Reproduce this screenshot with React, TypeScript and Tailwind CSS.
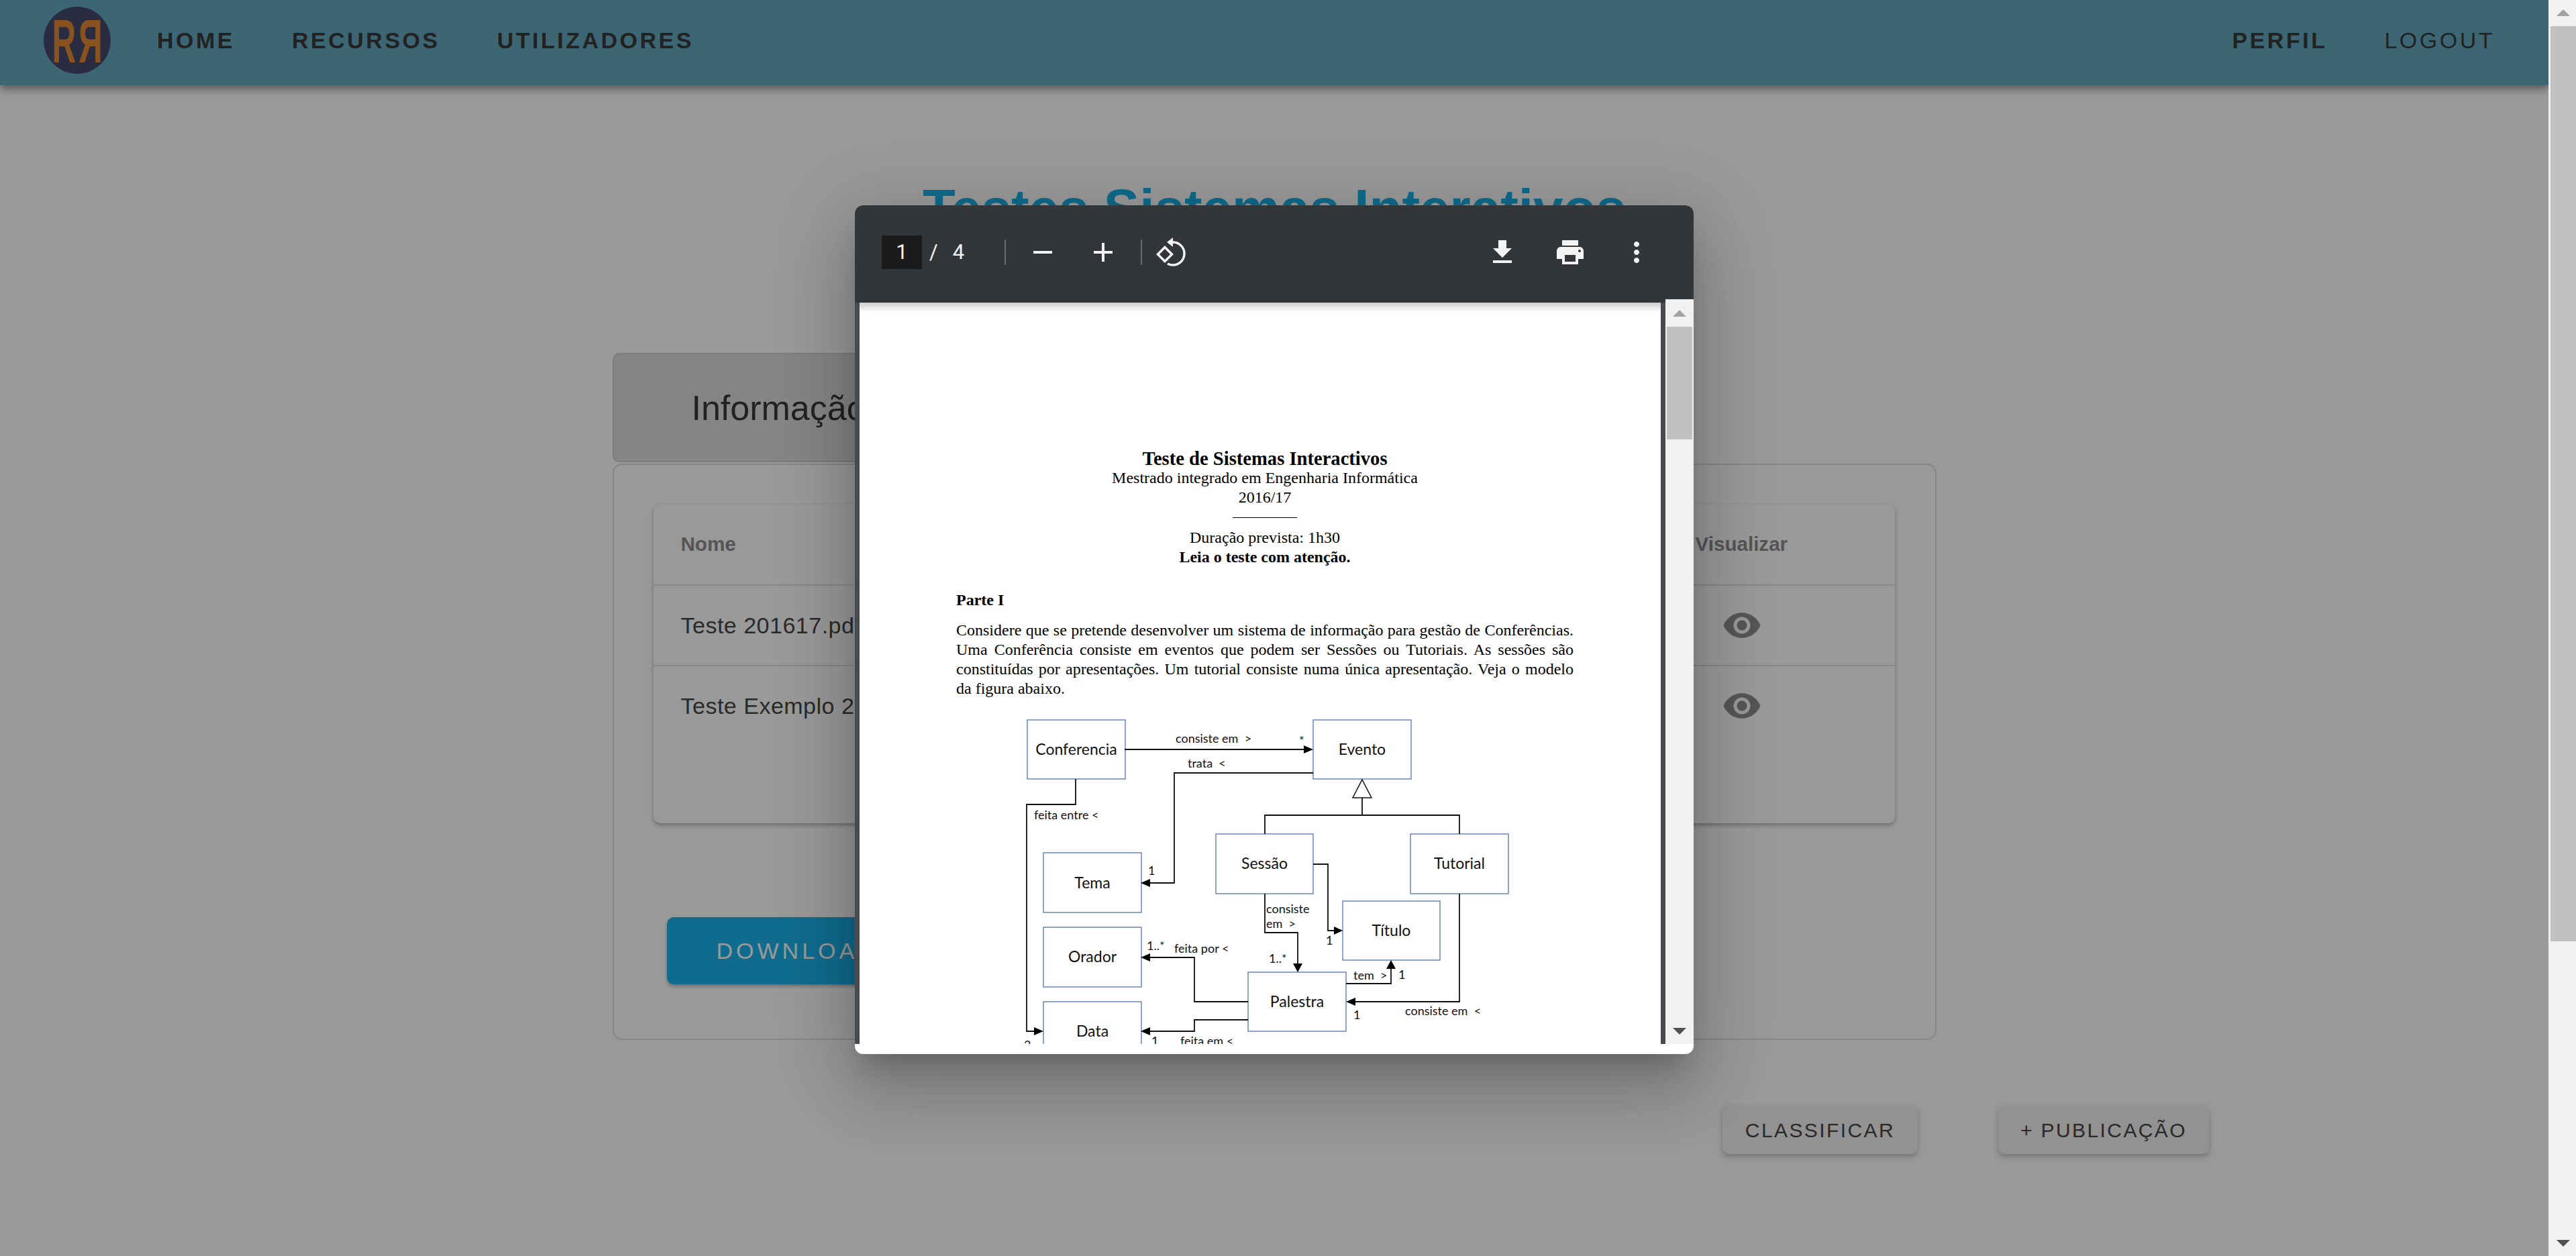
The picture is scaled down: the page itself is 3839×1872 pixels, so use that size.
import { Fragment } from "react";

const EYE =
  "M12 4.5C7 4.5 2.73 7.61 1 12c1.73 4.39 6 7.5 11 7.5s9.27-3.11 11-7.5c-1.73-4.39-6-7.5-11-7.5zM12 17c-2.76 0-5-2.24-5-5s2.24-5 5-5 5 2.24 5 5-2.24 5-5 5zm0-8c-1.66 0-3 1.34-3 3s1.34 3 3 3 3-1.34 3-3-1.34-3-3-3z";

function Logo() {
  return (
    <svg viewBox="0 0 100 100" className="h-[100px] w-[100px] shrink-0">
      <circle cx="50" cy="50" r="50" fill="#464b6e" />
      <g fill="#e68935" fontFamily="Liberation Sans, sans-serif" fontSize="90" fontWeight="700">
        <text transform="translate(12.500 83) scale(0.55 1)">R</text>
        <text transform="translate(87.500 83) scale(-0.55 1)">R</text>
      </g>
    </svg>
  );
}

function Nav() {
  return (
    <nav className="flex h-[127px] shrink-0 items-center bg-[#67aac3] pb-[7px] pl-[65px] pr-[80px] text-[34px] tracking-[3.5px] text-[#393939] shadow-[0_5px_12px_rgba(0,0,0,0.45)]">
      <Logo />
      <a className="ml-[69px] font-bold">HOME</a>
      <a className="ml-[85px] font-bold">RECURSOS</a>
      <a className="ml-[85px] font-bold">UTILIZADORES</a>
      <a className="ml-auto font-bold">PERFIL</a>
      <a className="ml-[85px]">LOGOUT</a>
    </nav>
  );
}

function FileRow({ name }: { name: string }) {
  return (
    <div className="flex h-[120px] items-center border-t-2 border-[#e0e0e0] pl-[41px] pr-[158px]">
      <span className="flex-1 text-[34px] tracking-[0.5px] text-[#464646]">{name}</span>
      <span className="flex w-[139px] justify-center">
        <svg viewBox="0 0 24 24" className="h-[60px] w-[60px] fill-[#8e8e8e]">
          <path d={EYE} />
        </svg>
      </span>
    </div>
  );
}

function Content() {
  return (
    <>
      <h1 className="mt-[144px] text-center text-[80px] font-bold leading-none text-[#19b1e8]">
        Testes Sistemas Interativos
      </h1>
      <section className="mx-auto mt-[175px] w-[1973px]">
        <div className="flex h-[163px] w-[1500px] items-center rounded-[10px] border-2 border-[#d0d0d0] bg-[#dedede] pl-[116px] text-[52px] text-[#393939]">
          Informação
        </div>
        <div className="mt-[2px] h-[859px] rounded-[14px] border-2 border-[#e0e0e0] pl-[59px] pr-[60px] pt-[59px]">
          <div className="h-[475px] rounded-[10px] shadow-[0_3px_6px_rgba(0,0,0,0.3)]">
            <div className="flex h-[119px] items-center pl-[41px] pr-[158px] text-[29.600px] font-bold text-[#8e8e8e]">
              <span className="flex-1">Nome</span>
              <span className="w-[139px]">Visualizar</span>
            </div>
            <FileRow name="Teste 201617.pdf" />
            <FileRow name="Teste Exemplo 2017.pdf" />
          </div>
          <button className="ml-[20px] mt-[140px] h-[100px] w-[700px] rounded-[10px] bg-[#1bb4ed] pl-[74px] text-left text-[34px] tracking-[5px] text-white shadow-[0_3px_5px_rgba(0,0,0,0.3)]">
            DOWNLOAD
          </button>
        </div>
      </section>
      <div className="mt-[98px] flex justify-end gap-[120px] pr-[506px]">
        <button className="h-[72px] rounded-[10px] bg-[#f3f3f3] px-[34px] text-[30px] tracking-[2.400px] text-[#464646] shadow-[0_4px_8px_rgba(0,0,0,0.25)]">
          CLASSIFICAR
        </button>
        <button className="h-[72px] rounded-[10px] bg-[#f3f3f3] px-[33px] text-[30px] tracking-[2.400px] text-[#464646] shadow-[0_4px_8px_rgba(0,0,0,0.25)]">
          + PUBLICAÇÃO
        </button>
      </div>
    </>
  );
}

function ToolIcon({ d, className }: { d: string; className?: string }) {
  return (
    <svg viewBox="0 0 24 24" className={`h-[48px] w-[48px] shrink-0 fill-[#f1f3f4] ${className ?? ""}`}>
      <path d={d} />
    </svg>
  );
}

function Toolbar() {
  return (
    <div className="flex h-[140px] shrink-0 items-center bg-[#323639] pl-[40px] pr-[61px] font-['Roboto',sans-serif] text-[31px] text-[#f1f3f4]">
      <span className="flex h-[50px] w-[60px] items-center justify-center bg-[#191b1c]">1</span>
      <span className="w-[123px] pl-[11px]">
        /<span className="ml-[22px]">4</span>
      </span>
      <span className="h-[38px] w-[2px] bg-[#6a6d70]" />
      <ToolIcon className="ml-[31px]" d="M19 13H5v-2h14v2z" />
      <ToolIcon className="ml-[42px]" d="M19 13h-6v6h-2v-6H5v-2h6V5h2v6h6v2z" />
      <span className="ml-[32px] h-[38px] w-[2px] bg-[#6a6d70]" />
      <svg viewBox="0 0 48 48" className="ml-[19px] h-[48px] w-[48px] shrink-0">
        <path d="M15 16.5 25.5 27 15 37.5 4.500 27z" fill="none" stroke="#f1f3f4" strokeWidth="3.500" />
        <path d="M27 9A17 17 0 1 1 19 41" fill="none" stroke="#f1f3f4" strokeWidth="3.500" />
        <path d="M18 9 27 2V16z" fill="#f1f3f4" />
      </svg>
      <ToolIcon className="ml-auto" d="M19 9h-4V3H9v6H5l7 7 7-7zM5 18v2h14v-2H5z" />
      <ToolIcon
        className="ml-[53px]"
        d="M19 8H5c-1.66 0-3 1.34-3 3v6h4v4h12v-4h4v-6c0-1.66-1.34-3-3-3zm-3 11H8v-5h8v5zm3-7c-.55 0-1-.45-1-1s.45-1 1-1 1 .45 1 1-.45 1-1 1zm-1-9H6v4h12V3z"
      />
      <ToolIcon
        className="ml-[51px]"
        d="M12 8c1.100 0 2-.9 2-2s-.9-2-2-2-2 .9-2 2 .9 2 2 2zm0 2c-1.100 0-2 .9-2 2s.9 2 2 2 2-.9 2-2-.9-2-2-2zm0 6c-1.100 0-2 .9-2 2s.9 2 2 2 2-.9 2-2-.9-2-2-2z"
      />
    </div>
  );
}

const BOXES: [string, number, number, number, number, number][] = [
  ["Conferencia", 1531, 1071, 146, 88, 1123],
  ["Evento", 1957, 1071, 146, 88, 1123],
  ["Tema", 1555, 1269, 146, 89, 1322],
  ["Sessão", 1812, 1241, 145, 89, 1293],
  ["Tutorial", 2102, 1241, 146, 89, 1293],
  ["Título", 2001, 1341, 145, 88, 1393],
  ["Orador", 1555, 1380, 146, 89, 1432],
  ["Palestra", 1860, 1447, 146, 88, 1499],
  ["Data", 1555, 1491, 146, 89, 1543],
];

const LINES = [
  "M1676 1115H1945",
  "M1957 1150H1750V1314H1712",
  "M1603 1159V1197H1530V1535H1543",
  "M2030 1186V1213M1885 1241V1213H2175V1241",
  "M1957 1286H1979V1385H1990",
  "M1885 1330V1388H1934V1436",
  "M2006 1464H2073V1440",
  "M2175 1330V1491H2018",
  "M1860 1491H1780V1425H1712",
  "M1860 1518H1780V1535H1712",
];

// arrow heads, tip first
const HEADS = [
  "1957,1115 1943,1109 1943,1121",
  "1700,1314 1714,1308 1714,1320",
  "1555,1535 1541,1529 1541,1541",
  "2001,1385 1988,1379 1988,1391",
  "1934,1447 1927,1434 1941,1434",
  "2073,1429 2066,1442 2080,1442",
  "2006,1491 2020,1485 2020,1497",
  "1700,1425 1714,1419 1714,1431",
  "1700,1535 1714,1529 1714,1541",
];

const LABELS: [string, number, number][] = [
  ["consiste em  >", 1752, 1105],
  ["*", 1936, 1108],
  ["trata  <", 1770, 1142],
  ["feita entre <", 1541, 1219],
  ["1", 1711, 1302],
  ["consiste", 1887, 1359],
  ["em  >", 1887, 1381],
  ["1", 1976, 1406],
  ["1..*", 1709, 1414],
  ["feita por <", 1750, 1418],
  ["1..*", 1891, 1433],
  ["tem  >", 2017, 1458],
  ["1", 2084, 1457],
  ["consiste em  <", 2094, 1511],
  ["1", 2017, 1517],
  ["1", 1716, 1556],
  ["feita em <", 1759, 1556],
  ["2", 1526, 1562],
];

function Diagram() {
  return (
    <svg viewBox="1281 1040 1194 516" className="mt-px block h-[516px] w-[1194px]" fontFamily="Lato, sans-serif">
      {BOXES.map(([name, x, y, w, h, base]) => (
        <Fragment key={name}>
          <rect x={x} y={y} width={w} height={h} fill="white" stroke="#6a86b8" strokeWidth="1.500" />
          <text x={x + w / 2} y={base} textAnchor="middle" fontSize="23" fill="#111">
            {name}
          </text>
        </Fragment>
      ))}
      <path d={LINES.join("")} fill="none" stroke="#111" strokeWidth="1.800" />
      <path d="M2030 1160 2044 1187H2016z" fill="white" stroke="#111" strokeWidth="1.500" />
      {HEADS.map((p) => (
        <polygon key={p} points={p} fill="#000" />
      ))}
      {LABELS.map(([t, x, y]) => (
        <text key={`${t}${x}`} x={x} y={y} fontSize="18" fill="#111" xmlSpace="preserve">
          {t}
        </text>
      ))}
    </svg>
  );
}

function PdfPage() {
  return (
    <div className="relative h-full w-[1194px] overflow-hidden bg-white pt-[218px] font-['Liberation_Serif',serif] text-[24px] leading-[29px] text-black">
      <div className="absolute inset-x-0 top-0 h-[14px] bg-gradient-to-b from-black/20 to-transparent" />
      <div className="pl-[144px] pr-[130px] text-center">
        <p className="text-[28.600px] font-bold">Teste de Sistemas Interactivos</p>
        <p>Mestrado integrado em Engenharia Informática</p>
        <p>2016/17</p>
        <div className="mx-auto mt-[15px] h-px w-[96px] bg-black" />
        <p className="mt-[15px]">Duração prevista: 1h30</p>
        <p className="font-bold">Leia o teste com atenção.</p>
      </div>
      <div className="pl-[144px] pr-[130px]">
        <p className="mt-[35px] font-bold">Parte I</p>
        <div className="mt-[16px]">
          <p className="[text-align-last:justify]">
            Considere que se pretende desenvolver um sistema de informação para gestão de Conferências.
          </p>
          <p className="[text-align-last:justify]">
            Uma Conferência consiste em eventos que podem ser Sessões ou Tutoriais. As sessões são
          </p>
          <p className="[text-align-last:justify]">
            constituídas por apresentações. Um tutorial consiste numa única apresentação. Veja o modelo
          </p>
          <p>da figura abaixo.</p>
        </div>
      </div>
      <Diagram />
    </div>
  );
}

function PdfModal() {
  return (
    <div className="flex h-[1265px] w-[1250px] flex-col overflow-hidden rounded-[12px] bg-white shadow-[0_26px_36px_-17px_rgba(0,0,0,0.2),0_58px_92px_7px_rgba(0,0,0,0.14),0_22px_110px_20px_rgba(0,0,0,0.12)]">
      <Toolbar />
      <div className="flex h-[1110px] shrink-0">
        <div className="flex flex-1 justify-center bg-[#474b4f] bg-gradient-to-b from-[#323639] from-[5px] to-[#474b4f] to-[5px] pt-[5px]">
          <PdfPage />
        </div>
        <div className="flex w-[42px] shrink-0 flex-col items-center bg-[#f1f1f1] pb-[14px] pt-[16px]">
          <svg viewBox="0 0 20 10" className="h-[10px] w-[20px] fill-[#a3a3a3]">
            <path d="M10 0 20 10H0z" />
          </svg>
          <div className="mt-[15px] h-[168px] w-[38px] bg-[#c1c1c1]" />
          <svg viewBox="0 0 20 10" className="mt-auto h-[10px] w-[20px] fill-[#505050]">
            <path d="M0 0H20L10 10z" />
          </svg>
        </div>
      </div>
    </div>
  );
}

function PageScrollbar() {
  return (
    <aside className="flex w-[41px] shrink-0 flex-col items-center bg-[#f1f1f1] pb-[14px] pl-[2px] pt-[14px]">
      <svg viewBox="0 0 20 10" className="h-[10px] w-[20px] fill-[#a3a3a3]">
        <path d="M10 0 20 10H0z" />
      </svg>
      <div className="mt-[15px] h-[1364px] w-[38px] bg-[#c1c1c1]" />
      <svg viewBox="0 0 20 10" className="mt-auto h-[10px] w-[20px] fill-[#505050]">
        <path d="M0 0H20L10 10z" />
      </svg>
    </aside>
  );
}

export default function App() {
  return (
    <div className="flex h-[1872px] overflow-hidden bg-white font-['Liberation_Sans',sans-serif]">
      <main className="relative flex-1 overflow-hidden">
        <Nav />
        <Content />
        {/* dialog backdrop */}
        <div className="absolute inset-0 flex items-start justify-center bg-black/40 pt-[306px]">
          <PdfModal />
        </div>
      </main>
      <PageScrollbar />
    </div>
  );
}
